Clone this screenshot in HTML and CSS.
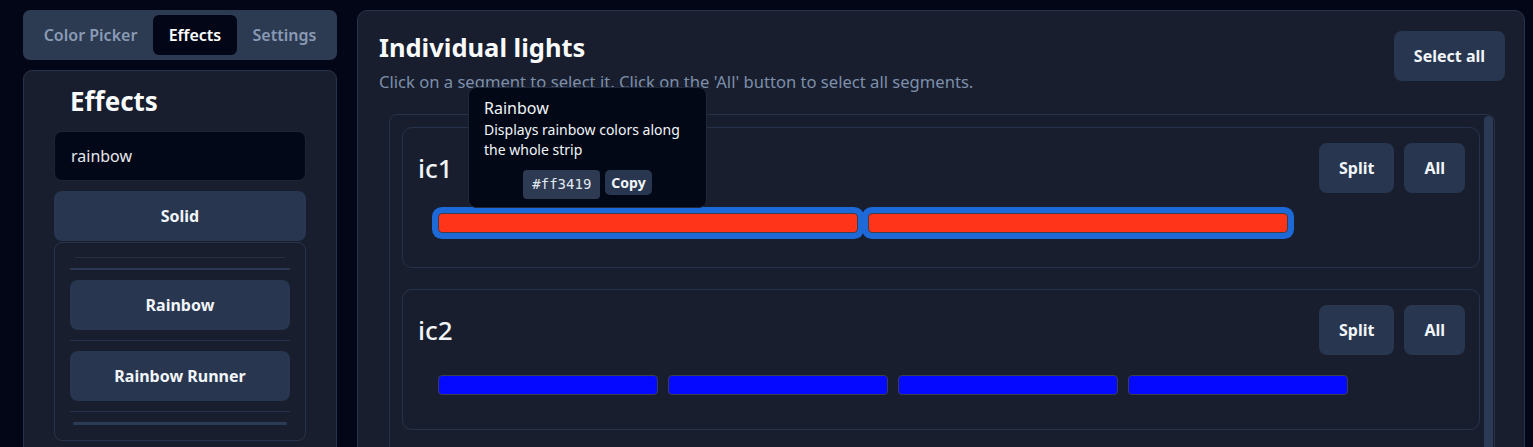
FILE: index.html
```html
<!DOCTYPE html>
<html lang="en">
<head>
<meta charset="utf-8">
<title>Individual lights</title>
<link rel="stylesheet" href="styles.css">
</head>
<body>
<div class="app">
  <aside class="sidebar">
    <nav class="tabs">
      <button class="tab">Color Picker</button>
      <button class="tab active">Effects</button>
      <button class="tab">Settings</button>
    </nav>
    <section class="effects-card">
      <h2 class="effects-title">Effects</h2>
      <input class="search" type="text" value="rainbow">
      <button class="effect-btn solid">Solid</button>
      <div class="effect-list">
        <div class="ghost-line"></div>
        <div class="sep sep-strong"></div>
        <button class="effect-btn">Rainbow</button>
        <div class="sep"></div>
        <button class="effect-btn">Rainbow Runner</button>
        <div class="sep"></div>
        <div class="hscroll"></div>
      </div>
    </section>
  </aside>

  <main class="main">
    <header class="main-header">
      <div class="heading">
        <h1 class="title">Individual lights</h1>
        <p class="subtitle">Click on a segment to select it. Click on the 'All' button to select all segments.</p>
      </div>
      <button class="btn">Select all</button>
    </header>

    <div class="scroll-box">
      <div class="strips">
        <div class="strip">
          <div class="strip-head">
            <h3 class="strip-name">ic1</h3>
            <div class="strip-actions">
              <button class="btn">Split</button>
              <button class="btn">All</button>
            </div>
          </div>
          <div class="segments">
            <div class="segment selected" style="width:420px;background:#ff3419"></div>
            <div class="segment selected" style="width:420px;background:#ff3419"></div>
          </div>
        </div>
        <div class="strip">
          <div class="strip-head">
            <h3 class="strip-name">ic2</h3>
            <div class="strip-actions">
              <button class="btn">Split</button>
              <button class="btn">All</button>
            </div>
          </div>
          <div class="segments">
            <div class="segment" style="width:220px;background:#0509ff"></div>
            <div class="segment" style="width:220px;background:#0509ff"></div>
            <div class="segment" style="width:220px;background:#0509ff"></div>
            <div class="segment" style="width:220px;background:#0509ff"></div>
          </div>
        </div>
      </div>
      <div class="scrollbar"></div>
    </div>

    <div class="tooltip">
      <div class="tip-title">Rainbow</div>
      <div class="tip-desc">Displays rainbow colors along the whole strip</div>
      <div class="tip-row">
        <code class="tip-code">#ff3419</code>
        <button class="tip-copy">Copy</button>
      </div>
    </div>
  </main>
</div>
</body>
</html>
```
FILE: styles.css
```css
* { box-sizing: border-box; }

html, body {
  margin: 0;
  height: 100%;
  overflow: hidden;
}

body {
  background: #020617;
  color: #f1f5f9;
  font-family: "Noto Sans", "Open Sans", sans-serif;
}

button {
  font-family: inherit;
  border: none;
  cursor: pointer;
}

.app {
  display: flex;
  align-items: flex-start;
  gap: 20px;
  padding: 10px 8px 0 23px;
  height: 100vh;
  overflow: hidden;
}

/* ---------- sidebar ---------- */
.sidebar {
  width: 314px;
  height: 470px;
  flex: none;
  display: flex;
  flex-direction: column;
  gap: 10px;
}

.tabs {
  display: flex;
  height: 50px;
  flex: none;
  padding: 5px;
  background: #2c3a52;
  border-radius: 7px;
}

.tab {
  flex: 1 1 auto;
  padding: 0 12px;
  background: transparent;
  color: #8a9ab4;
  font-size: 16px;
  font-weight: 600;
  border-radius: 6px;
}

.tab.active {
  background: #020617;
  color: #ffffff;
}

.effects-card {
  flex: 1;
  background: #181e2d;
  border: 1px solid #27334b;
  border-radius: 9px;
  padding: 12px 30px 0;
  display: flex;
  flex-direction: column;
}

.effects-title {
  margin: 0 0 12px 16px;
  font-size: 26px;
  line-height: 36px;
  font-weight: 700;
  color: #f8fafc;
}

.search {
  height: 50px;
  width: 100%;
  flex: none;
  background: #020817;
  border: 1px solid #1c2538;
  border-radius: 8px;
  padding: 0 16px;
  color: #e5e7eb;
  font-family: inherit;
  font-size: 16px;
  outline: none;
}

.effect-btn {
  height: 50px;
  width: 100%;
  flex: none;
  background: #28374f;
  color: #f1f5f9;
  font-size: 16px;
  font-weight: 700;
  border-radius: 8px;
}

.effect-btn.solid {
  margin-top: 10px;
}

.effect-list {
  margin-top: 1px;
  height: 199px;
  flex: none;
  border: 1px solid #27334b;
  border-radius: 8px;
  padding: 0 15px;
  display: flex;
  flex-direction: column;
}

.effect-list .effect-btn {
  margin-top: 10px;
}

.ghost-line {
  height: 1px;
  margin: 14px 5px 0;
  background: #252f44;
}

.sep {
  height: 1px;
  margin-top: 10px;
  background: #27334b;
}

.sep-strong {
  height: 2px;
  margin-top: 10px;
  background: #2b3852;
}

.hscroll {
  height: 3px;
  margin: 10px 3px 0;
  border-radius: 2px;
  background: #2b3a55;
}

/* ---------- main ---------- */
.main {
  position: relative;
  flex: 1;
  height: 480px;
  background: #181e2d;
  border: 1px solid #27334b;
  border-radius: 10px;
  padding: 20px 19px 0 21px;
  display: flex;
  flex-direction: column;
}

.main-header {
  display: flex;
  justify-content: space-between;
  align-items: flex-start;
}

.title {
  margin: 0;
  font-size: 25.5px;
  line-height: 32px;
  font-weight: 700;
  color: #f8fafc;
}

.subtitle {
  margin: 7px 0 0;
  font-size: 16.6px;
  line-height: 24px;
  color: #7d8fab;
}

.btn {
  height: 50px;
  padding: 0 20px;
  background: #28374f;
  color: #f1f5f9;
  font-size: 16px;
  font-weight: 700;
  border-radius: 8px;
}

.scroll-box {
  flex: 1;
  margin: 20px 10px 0;
  border: 1px solid #27334b;
  border-radius: 8px 8px 0 0;
  display: flex;
  overflow: hidden;
}

.strips {
  flex: 1;
  padding: 12px 4px 0 12px;
  display: flex;
  flex-direction: column;
  gap: 21px;
}

.scrollbar {
  width: 9px;
  margin: 1px 1px 0 0;
  background: #2b3a55;
  border-radius: 5px 5px 0 0;
}

.strip {
  border: 1px solid #27334b;
  border-radius: 10px;
  padding: 15px 14px 14px 15px;
}

.strip-head {
  display: flex;
  justify-content: space-between;
  align-items: center;
}

.strip-name {
  margin: 0;
  font-size: 26px;
  line-height: 34px;
  font-weight: 500;
  color: #f1f5f9;
}

.strip-actions {
  display: flex;
  gap: 10px;
}

.segments {
  display: flex;
  gap: 10px;
  padding: 20px;
}

.segment {
  height: 20px;
  border: 1px solid #3a3f4d;
  border-radius: 4px;
}

.segment.selected {
  box-shadow: 0 0 0 6px #1d69d8;
}

/* ---------- tooltip ---------- */
.tooltip {
  position: absolute;
  left: 110px;
  top: 76px;
  width: 239px;
  background: #030816;
  border: 1px solid #1f293b;
  border-radius: 8px;
  padding: 8px 15px 8px;
  z-index: 10;
}

.tip-title {
  font-size: 16px;
  line-height: 24px;
  color: #f1f5f9;
}

.tip-desc {
  font-size: 14px;
  line-height: 20px;
  color: #f1f5f9;
}

.tip-row {
  display: flex;
  justify-content: center;
  align-items: flex-start;
  gap: 5px;
  margin-top: 10px;
}

.tip-code {
  height: 29px;
  padding: 0 9px;
  background: #2d3a52;
  border-radius: 4px;
  font-family: "DejaVu Sans Mono", "Liberation Mono", monospace;
  font-size: 14px;
  line-height: 29px;
  color: #e2e8f0;
}

.tip-copy {
  height: 25px;
  padding: 0 6px;
  background: #28374f;
  color: #f1f5f9;
  font-size: 14px;
  font-weight: 700;
  border-radius: 5px;
}
```
